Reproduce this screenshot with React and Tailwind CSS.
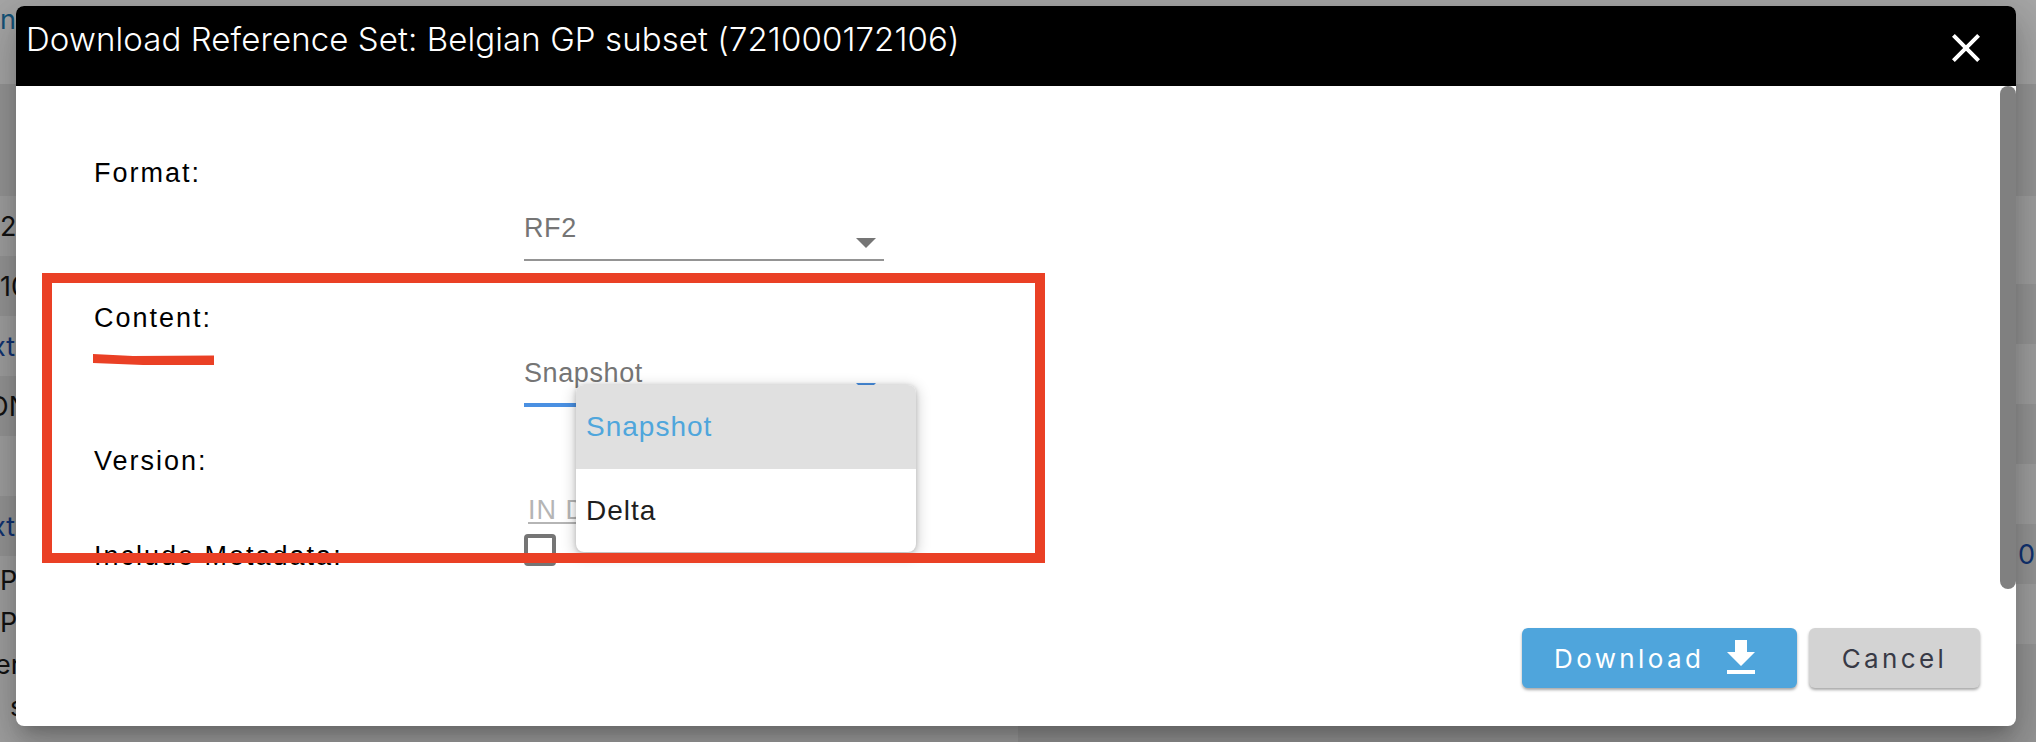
import React from "react";

const leftRows = [
  { h: "h-[84px]", bg: "bg-white", text: "n", color: "text-[#1f7fb8]", ml: "ml-0", align: "items-start pt-[6px]" },
  { h: "h-[112px]", bg: "bg-[#e6e6e6]", text: "" },
  { h: "h-[60px]", bg: "bg-[#f6f6f6]", text: "2", color: "text-[#1c1c1c]", ml: "ml-0" },
  { h: "h-[60px]", bg: "bg-[#e6e6e6]", text: "10", color: "text-[#1c1c1c]", ml: "ml-0" },
  { h: "h-[60px]", bg: "bg-[#f6f6f6]", text: "xt", color: "text-[#1a4fb0]", ml: "-ml-[9px]" },
  { h: "h-[60px]", bg: "bg-[#e6e6e6]", text: "ON", color: "text-[#1c1c1c]", ml: "-ml-[12px]" },
  { h: "h-[60px]", bg: "bg-[#f6f6f6]", text: "" },
  { h: "h-[60px]", bg: "bg-[#e6e6e6]", text: "xt", color: "text-[#1a4fb0]", ml: "-ml-[9px]" },
];

const rightRows = [
  { h: "h-[84px]", bg: "bg-white" },
  { h: "h-[112px]", bg: "bg-[#e6e6e6]" },
  { h: "h-[88px]", bg: "bg-[#f6f6f6]" },
  { h: "h-[60px]", bg: "bg-[#e6e6e6]" },
  { h: "h-[60px]", bg: "bg-[#f6f6f6]" },
  { h: "h-[60px]", bg: "bg-[#e6e6e6]" },
  { h: "h-[60px]", bg: "bg-[#f6f6f6]" },
  { h: "h-[60px]", bg: "bg-[#e6e6e6]", text: "0" },
  { h: "h-[60px]", bg: "bg-[#f6f6f6]" },
  { h: "h-[98px]", bg: "bg-[#e6e6e6]" },
];

const Caret = ({ color }) => (
  <svg width="20" height="10" viewBox="0 0 20 10" className={color}>
    <path d="M0 0h20L10 10z" fill="currentColor" />
  </svg>
);

const Page = () => (
  <div className="grid grid-cols-2 h-full font-['Inter',sans-serif] text-[27px] leading-none">
    <div className="flex flex-col">
      {leftRows.map((row, i) => (
        <div key={i} className={`${row.h} ${row.bg} flex ${row.align || "items-center"}`}>
          <span className={`${row.color} ${row.ml}`}>{row.text}</span>
        </div>
      ))}
      <div className="flex-1 bg-[#f6f6f6] flex flex-col pt-[11px] gap-[15px] text-[#1c1c1c]">
        <span>P</span>
        <span>P</span>
        <span className="-ml-[5px]">er</span>
        <span className="ml-[10px]">s</span>
      </div>
    </div>
    <div className="flex flex-col">
      {rightRows.map((row, i) => (
        <div key={i} className={`${row.h} ${row.bg} flex items-center justify-end pr-[1px] text-[#1a4fb0]`}>
          {row.text}
        </div>
      ))}
    </div>
  </div>
);

const Select = ({ value, focused }) => (
  <div
    className={`w-[360px] flex justify-between pt-[6px] text-[#757575] border-b-2 ${
      focused ? "h-[57px] border-b-4 border-[#4a90e2]" : "h-[56px] border-[#949494]"
    }`}
  >
    <span className="text-[27px] leading-[34px] tracking-[0.6px]">{value}</span>
    <span className="mr-[8px] mt-[27px]">
      <Caret color={focused ? "text-[#4a90e2]" : "text-[#757575]"} />
    </span>
  </div>
);

const Label = ({ children }) => (
  <div className="w-[429px] shrink-0 text-[27px] leading-[40px] tracking-[2px] text-black">{children}</div>
);

const Form = () => (
  <div className="flex-1 pl-[78px] pt-[67px] overflow-hidden font-['Liberation_Sans',sans-serif]">
    <div className="flex items-start">
      <Label>Format:</Label>
      <div className="mt-[52px] ml-[1px]">
        <Select value="RF2" />
      </div>
    </div>
    <div className="flex items-start mt-[37px]">
      <Label>Content:</Label>
      <div className="mt-[52px] ml-[1px]">
        <Select value="Snapshot" focused />
      </div>
    </div>
    <div className="flex items-start mt-[34px]">
      <Label>Version:</Label>
      <div className="mt-[49px] ml-[5px] h-[34px] w-[120px] border-b-2 border-[#b5b5b5] text-[27px] leading-[40px] tracking-[1px] text-[#b5b5b5]">
        IN DEV
      </div>
    </div>
    <div className="flex items-start mt-[12px]">
      <Label>Include Metadata:</Label>
      <div className="w-[32px] h-[32px] ml-[1px] -mt-[2px] rounded-[4px] border-4 border-[#757575]" />
    </div>
  </div>
);

const Modal = () => (
  <div className="absolute left-[16px] top-[6px] w-[2000px] h-[720px] flex flex-col bg-white rounded-[8px] overflow-hidden shadow-[0_11px_15px_-7px_rgba(0,0,0,0.2),0_24px_38px_3px_rgba(0,0,0,0.14),0_9px_46px_8px_rgba(0,0,0,0.12)]">
    <div className="h-[80px] shrink-0 bg-black flex items-start justify-between pl-[10px] pr-[26px]">
      <h1 className="pt-[14px] font-['Inter',sans-serif] font-light text-[33px] leading-[38px] tracking-[0.1px] text-white">
        Download Reference Set: Belgian GP subset (721000172106)
      </h1>
      <svg width="48" height="48" viewBox="0 0 24 24" className="mt-[18px] text-white">
        <path fill="currentColor" d="M19 6.41 17.59 5 12 10.59 6.41 5 5 6.41 10.59 12 5 17.59 6.41 19 12 13.41 17.59 19 19 17.59 13.41 12z" />
      </svg>
    </div>
    <Form />
    <div className="flex justify-end gap-[12px] pr-[36px] pb-[38px] font-['Inter',sans-serif] text-[26px] tracking-[3.4px]">
      <button className="h-[60px] w-[275px] flex items-center pl-[32px] gap-[14px] rounded-[6px] bg-[#4fa5dc] text-white shadow-[0_2px_3px_rgba(0,0,0,0.35)]">
        Download
        <svg width="48" height="48" viewBox="0 0 24 24" className="-ml-[1px]">
          <path fill="currentColor" d="M19 9h-4V3H9v6H5l7 7 7-7zM5 18v2h14v-2H5z" />
        </svg>
      </button>
      <button className="h-[60px] w-[171px] rounded-[6px] bg-[#d3d3d3] text-[#383a46] shadow-[0_2px_3px_rgba(0,0,0,0.35)]">
        Cancel
      </button>
    </div>
    <div className="absolute right-0 top-[80px] w-[16px] h-[503px] rounded-full bg-[#808080]" />
  </div>
);

const Menu = () => (
  <div className="absolute left-[576px] top-[385px] w-[340px] h-[167px] bg-white rounded-[8px] overflow-hidden shadow-[0_3px_14px_2px_rgba(0,0,0,0.18),0_1px_5px_rgba(0,0,0,0.2)] font-['Liberation_Sans',sans-serif] text-[28px] tracking-[1px]">
    <div className="h-[84px] bg-[#e0e0e0] flex items-center pl-[10px] text-[#4fa6dc]">Snapshot</div>
    <div className="h-[83px] flex items-center pl-[10px] text-[#1e1e1e]">Delta</div>
  </div>
);

const App = () => {
  return (
    <div className="relative w-[2036px] h-[742px] overflow-hidden">
      <Page />
      <div className="absolute inset-0 bg-black/35" />
      <Modal />
      <Menu />
      {/* annotation drawn on top of the screenshot */}
      <div className="absolute left-[42px] top-[273px] w-[1003px] h-[290px] border-[10px] border-[#ea4025]" />
      <svg width="122" height="12" viewBox="0 0 122 12" className="absolute left-[93px] top-[354px]">
        <path d="M0 0 L40 2 L121 1.5 L121 11 L50 11 L0 9z" fill="#ea4025" />
      </svg>
    </div>
  );
};

export default App;
